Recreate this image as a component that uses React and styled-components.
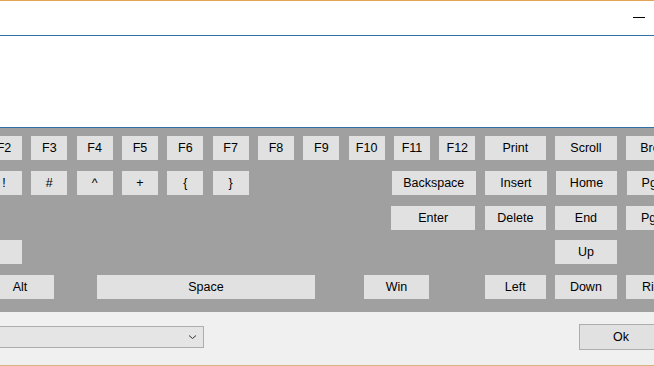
import React from "react";
import styled, { createGlobalStyle } from "styled-components";

const Global = createGlobalStyle`
  html, body { margin: 0; padding: 0; }
  body {
    width: 654px;
    height: 366px;
    overflow: hidden;
    background: #ffffff;
    font-family: "Liberation Sans", Arial, sans-serif;
  }
`;

const Window = styled.div`
  width: 654px;
  height: 366px;
  display: flex;
  flex-direction: column;
  overflow: hidden;
  border-top: 1px solid #e3a352;
  border-bottom: 1px solid #d9b57c;
  box-sizing: border-box;
`;

const TitleBar = styled.div`
  height: 35px;
  flex: none;
  display: flex;
  justify-content: flex-end;
  align-items: flex-start;
  padding: 16px 9px 0 0;
  box-sizing: border-box;
  background: #ffffff;
  border-bottom: 1px solid #2f70a6;
`;

const MinimizeGlyph = styled.span`
  display: block;
  width: 12px;
  height: 1px;
  background: #000000;
`;

const Content = styled.div`
  height: 91px;
  flex: none;
  background: #ffffff;
  border-bottom: 1px solid #2f70a6;
`;

const Keyboard = styled.div`
  height: 184px;
  flex: none;
  background: #a0a0a0;
  display: flex;
  flex-direction: column;
  gap: 10.75px;
  padding-top: 8px;
  box-sizing: border-box;
  overflow: hidden;
`;

const Row = styled.div`
  display: flex;
  gap: 9.33px;
  margin-left: ${(p) => p.$offset ?? -14}px;
  height: 24px;
`;

const Key = styled.div`
  flex: none;
  width: ${(p) => p.$w || 36}px;
  height: 24px;
  background: #e1e1e1;
  display: flex;
  align-items: center;
  justify-content: center;
  font-size: 12.5px;
  color: #000000;
  white-space: nowrap;
  overflow: hidden;
`;

const Spacer = styled.div`
  flex: none;
  width: ${(p) => p.$w}px;
`;

const Footer = styled.div`
  flex: 1;
  background: #f0f0f0;
  display: flex;
  align-items: center;
  justify-content: space-between;
  padding-bottom: 3px;
  box-sizing: border-box;
`;

const Combo = styled.div`
  width: 214px;
  height: 22px;
  margin-left: -10px;
  box-sizing: border-box;
  border: 1px solid #adadad;
  background: #e5e5e5;
  display: flex;
  align-items: center;
  justify-content: flex-end;
  padding-right: 6px;
`;

const OkButton = styled.div`
  width: 84px;
  height: 26px;
  margin-right: -9px;
  box-sizing: border-box;
  border: 1px solid #adadad;
  background: #e1e1e1;
  display: flex;
  align-items: center;
  justify-content: center;
  font-size: 12.5px;
  color: #000000;
`;

const Chevron = () => (
  <svg width="9" height="6" viewBox="0 0 9 6">
    <path d="M1 1.5 L4.5 4.5 L8 1.5" fill="none" stroke="#333" strokeWidth="1" />
  </svg>
);

const fRow = ["F2", "F3", "F4", "F5", "F6", "F7", "F8", "F9", "F10", "F11", "F12"];
const symRow = ["!", "#", "^", "+", "{", "}"];

export default function App() {
  return (
    <>
      <Global />
      <Window>
        <TitleBar>
          <MinimizeGlyph />
        </TitleBar>
        <Content />
        <Keyboard>
          <Row>
            {fRow.map((k) => (
              <Key key={k}>{k}</Key>
            ))}
            <Key $w={61.33}>Print</Key>
            <Key $w={61.33}>Scroll</Key>
            <Key $w={61.33}>Break</Key>
          </Row>
          <Row>
            {symRow.map((k) => (
              <Key key={k}>{k}</Key>
            ))}
            <Spacer $w={124.3} />
            <Key $w={84.3}>Backspace</Key>
            <Key $w={61.33}>Insert</Key>
            <Key $w={61.33}>Home</Key>
            <Key $w={61.33}>PgUp</Key>
          </Row>
          <Row>
            <Spacer $w={395.67} />
            <Key $w={84.3}>Enter</Key>
            <Key $w={61.33}>Delete</Key>
            <Key $w={61.33}>End</Key>
            <Key $w={61.33}>PgDn</Key>
          </Row>
          <Row $offset={-78}>
            <Key $w={100}>Shift</Key>
            <Spacer $w={514.7} />
            <Key $w={61.33}>Up</Key>
          </Row>
          <Row>
            <Key $w={68}>Alt</Key>
            <Spacer $w={24.3} />
            <Key $w={218}>Space</Key>
            <Spacer $w={30.3} />
            <Key $w={65}>Win</Key>
            <Spacer $w={37} />
            <Key $w={61.33}>Left</Key>
            <Key $w={61.33}>Down</Key>
            <Key $w={61.33}>Right</Key>
          </Row>
        </Keyboard>
        <Footer>
          <Combo>
            <Chevron />
          </Combo>
          <OkButton>Ok</OkButton>
        </Footer>
      </Window>
    </>
  );
}
